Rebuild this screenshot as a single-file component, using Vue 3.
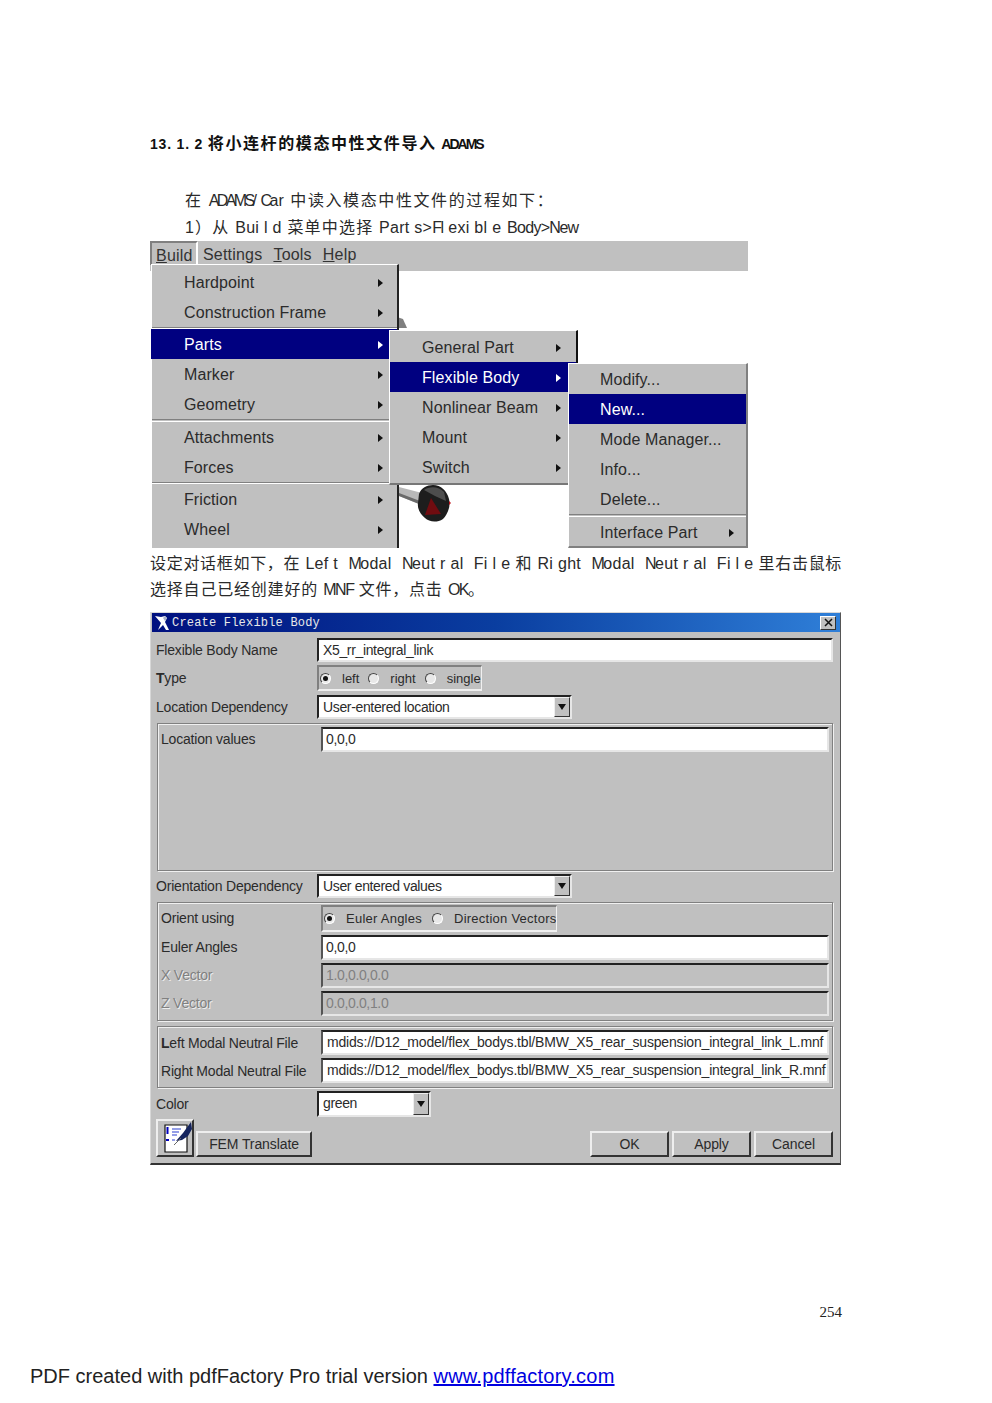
<template>
  <div class="sheet">
    <div class="doc">
      <h2 class="heading">13. 1. 2 <span class="hz">将小连杆的模态中性文件导入</span> <span class="sq">ADAMS</span></h2>

      <p class="line first">在 <span class="sq">ADAMS/</span> <span class="sq">C</span><span class="la">ar</span> 中读入模态中性文件的过程如下：</p>
      <p class="line second">1）从 <span class="la">Bui l d</span> 菜单中选择 <span class="la">Part s&gt;</span><span class="sq">Fl</span> <span class="la">exi bl e</span> <span class="tight">Body&gt;</span><span class="sq">N</span><span class="tight">ew</span></p>

      <div class="shot">
        <div class="menubar">
          <span class="tab"><u>B</u>uild</span>
          <span class="bar-item">Settings</span>
          <span class="bar-item"><u>T</u>ools</span>
          <span class="bar-item"><u>H</u>elp</span>
        </div>

        <!-- bit of the model showing behind the menus -->
        <svg class="model-top" width="14" height="14" viewBox="0 0 14 14">
          <path d="M0 0 L6 2 L10 11 L0 11 Z" fill="#808080" />
        </svg>
        <svg class="model" width="56" height="42" viewBox="0 0 56 42">
          <path d="M2 4 L25 10 L22 21 L2 13 Z" fill="#b8b8b8" />
          <path d="M2 10 L23 18 L22 21 L2 13 Z" fill="#6a6a6a" />
          <path d="M22 11 C24 5 30 2 36 2 C44 2 50 8 52 16 C54 24 50 32 46 36 C40 40 32 39 28 35 C24 32 20 26 21 20 Z" fill="#1d1d1d" />
          <path d="M27 7 C32 3 42 3 47 9 L49 18 L38 13 Z" fill="#4d4d4d" />
          <path d="M34 15 L28 32 L44 31 Z" fill="#700c10" />
          <path d="M52 18 L54 20 L52 22 Z" fill="#c01018" />
        </svg>

        <div v-for="menu in menus" :key="menu.name" class="menu" :class="menu.name">
          <template v-for="(item, i) in menu.items" :key="i">
            <div v-if="item.sep" class="sep" :style="{ height: item.sep + 'px' }"></div>
            <div v-else class="item" :class="{ on: item.on }">
              <span>{{ item.label }}</span>
              <i v-if="item.sub" class="arrow"></i>
            </div>
          </template>
        </div>
      </div>

      <p class="line just">设定对话框如下，在 <span class="la">Lef t</span>&nbsp; <span class="sq">M</span><span class="la">odal</span>&nbsp; <span class="sq">N</span><span class="la">eut r al</span>&nbsp; <span class="la">Fi l e</span> 和 <span class="la">Ri ght</span>&nbsp; <span class="sq">M</span><span class="la">odal</span>&nbsp; <span class="sq">N</span><span class="la">eut r al</span>&nbsp; <span class="la">Fi l e</span> 里右击鼠标</p>
      <p class="line">选择自己已经创建好的 <span class="sq">MNF</span> 文件，点击 <span class="sq">OK</span>。</p>

      <div class="dialog">
        <div class="titlebar">
          <svg class="logo" width="16" height="16" viewBox="0 0 16 16">
            <path d="M0 1 L6 2 L10 1 L12 3 L10 7 L14 15 L11 15 L8 10 L3 15 L6 8 Z" fill="#fff" />
            <path d="M8 3 L10 1 L12 3 L10 6 Z" fill="#aab2cc" />
          </svg>
          <span class="title-text">Create Flexible Body</span>
          <span class="close">
            <svg width="9" height="9" viewBox="0 0 9 9"><path d="M1 1 L8 8 M8 1 L1 8" stroke="#111" stroke-width="1.5" /></svg>
          </span>
        </div>

        <div class="body">
          <div class="row mt6">
            <label class="lbl">Flexible Body Name</label>
            <div class="field wide">X5_rr_integral_link</div>
          </div>

          <div class="row r26 mt3">
            <label class="lbl"><b>T</b>ype</label>
            <div class="radios type-radios">
              <span class="radio on"></span><span class="r-text">left</span>
              <span class="radio"></span><span class="r-text">right</span>
              <span class="radio"></span><span class="r-text">single</span>
            </div>
          </div>

          <div class="row mt4">
            <label class="lbl">Location Dependency</label>
            <div class="field select">
              <span>User-entered location</span>
              <span class="drop"><i></i></span>
            </div>
          </div>

          <div class="panel loc mt4">
            <div class="prow">
              <label class="lbl inner">Location values</label>
              <div class="field inner-field">0,0,0</div>
            </div>
          </div>

          <div class="row mt3">
            <label class="lbl">Orientation Dependency</label>
            <div class="field select">
              <span>User entered values</span>
              <span class="drop"><i></i></span>
            </div>
          </div>

          <div class="panel orient mt4">
            <div class="prow h27">
              <label class="lbl inner">Orient using</label>
              <div class="radios orient-radios">
                <span class="radio on"></span><span class="r-text">Euler Angles</span>
                <span class="radio"></span><span class="r-text">Direction Vectors</span>
              </div>
            </div>
            <div class="prow mt3">
              <label class="lbl inner">Euler Angles</label>
              <div class="field inner-field">0,0,0</div>
            </div>
            <div class="prow mt3">
              <label class="lbl inner off">X Vector</label>
              <div class="field inner-field dis">1.0,0.0,0.0</div>
            </div>
            <div class="prow mt3">
              <label class="lbl inner off">Z Vector</label>
              <div class="field inner-field dis">0.0,0.0,1.0</div>
            </div>
          </div>

          <div class="panel files mt5">
            <div class="prow">
              <label class="lbl inner"><b>L</b>eft Modal Neutral File</label>
              <div class="field inner-field path">mdids://D12_model/flex_bodys.tbl/BMW_X5_rear_suspension_integral_link_L.mnf</div>
            </div>
            <div class="prow mt3">
              <label class="lbl inner">Right Modal Neutral File</label>
              <div class="field inner-field path">mdids://D12_model/flex_bodys.tbl/BMW_X5_rear_suspension_integral_link_R.mnf</div>
            </div>
          </div>

          <div class="row r26 mt3">
            <label class="lbl">Color</label>
            <div class="field select short">
              <span>green</span>
              <span class="drop"><i></i></span>
            </div>
          </div>

          <div class="actions">
            <button class="btn icon-btn">
              <svg width="32" height="32" viewBox="0 0 32 32">
                <path d="M6 3 H28 V30 H6 Z" fill="#fff" stroke="#111" stroke-width="1.2" />
                <path d="M8.5 5 V12 M7 18 H10" stroke="#0000c0" stroke-width="2" />
                <path d="M13 7 H22 M13 10 H20 M13 13 H18 M13 18 H16" stroke="#2a3fd0" stroke-width="1.2" />
                <path d="M17 19 L24 11 L32 0 L33 7 L29 14 L23 18 Z" fill="#16255e" />
                <path d="M15 23 L22 16" stroke="#666" stroke-width="1" />
              </svg>
            </button>
            <button class="btn fem">FEM Translate</button>
            <span class="grow"></span>
            <button class="btn act">OK</button>
            <button class="btn act">Apply</button>
            <button class="btn act">Cancel</button>
          </div>
        </div>
      </div>

      <div class="page-no">254</div>
    </div>

    <div class="footer">PDF created with pdfFactory Pro trial version <a href="#">www.pdffactory.com</a></div>
  </div>
</template>

<script setup>
const menus = [
  {
    name: 'm1',
    items: [
      { label: 'Hardpoint', sub: true },
      { label: 'Construction Frame', sub: true },
      { sep: 2 },
      { label: 'Parts', sub: true, on: true },
      { label: 'Marker', sub: true },
      { label: 'Geometry', sub: true },
      { sep: 3 },
      { label: 'Attachments', sub: true },
      { label: 'Forces', sub: true },
      { sep: 2 },
      { label: 'Friction', sub: true },
      { label: 'Wheel', sub: true }
    ]
  },
  {
    name: 'm2',
    items: [
      { label: 'General Part', sub: true },
      { label: 'Flexible Body', sub: true, on: true },
      { label: 'Nonlinear Beam', sub: true },
      { label: 'Mount', sub: true },
      { label: 'Switch', sub: true }
    ]
  },
  {
    name: 'm3',
    items: [
      { label: 'Modify...' },
      { label: 'New...', on: true },
      { label: 'Mode Manager...' },
      { label: 'Info...' },
      { label: 'Delete...' },
      { sep: 3 },
      { label: 'Interface Part', sub: true }
    ]
  }
]
</script>

<style>
html, body {
  background: #fff;
}
</style>

<style scoped>
.sheet {
  width: 992px;
  height: 1403px;
  background: #fff;
  font-family: "Liberation Sans", "Noto Sans CJK SC", sans-serif;
  color: #1c1c1c;
  overflow: hidden;
}

.doc {
  padding: 134px 0 0 150px;
  width: 692px;
}

.heading {
  margin: 0;
  height: 19px;
  line-height: 19px;
  font-size: 14px;
  font-weight: 700;
  white-space: nowrap;
  letter-spacing: 0.8px;
  color: #111;
}

.heading .hz {
  font-size: 16px;
  letter-spacing: 1.6px;
}

.heading .sq {
  font-size: 14px;
  letter-spacing: -2px;
}

.line {
  margin: 0;
  height: 26px;
  line-height: 26px;
  font-size: 16px;
  letter-spacing: 0.8px;
  white-space: nowrap;
  font-weight: 400;
  color: #2a2a2a;
}

.line.first {
  margin-top: 34px;
  height: 27px;
  line-height: 27px;
  padding-left: 35px;
  letter-spacing: 1.6px;
}

.line.first .sq {
  letter-spacing: -2.6px;
}

.line.second {
  height: 27px;
  line-height: 27px;
  padding-left: 35px;
  letter-spacing: 1.2px;
}

.line.just {
  margin-top: 3px;
  white-space: normal;
  text-align: justify;
  text-align-last: justify;
  letter-spacing: 0.6px;
}

.la {
  letter-spacing: 0.3px;
}

.tight {
  letter-spacing: -0.7px;
}

.sq {
  letter-spacing: -1.5px;
}

/* menu screenshot */
.shot {
  position: relative;
  width: 598px;
  height: 307px;
}

.menubar {
  height: 30px;
  background: #c0c0c0;
  display: flex;
  align-items: flex-start;
  font-size: 16px;
  line-height: 27px;
  letter-spacing: 0.2px;
  color: #333;
}

.tab {
  box-sizing: border-box;
  width: 48px;
  height: 24px;
  padding-left: 4px;
  border-top: 2px solid #808080;
  border-left: 2px solid #808080;
  border-right: 2px solid #fff;
  line-height: 26px;
  background: #c0c0c0;
}

.bar-item {
  margin-left: 5px;
  margin-right: 6px;
}

.model-top {
  position: absolute;
  left: 247px;
  top: 76px;
}

.model {
  position: absolute;
  left: 247px;
  top: 242px;
}

.menu {
  position: absolute;
  box-sizing: border-box;
  background: #c0c0c0;
  border-top: 1px solid #fff;
  border-left: 1px solid #fff;
}

.m1 {
  left: 1px;
  top: 23px;
  width: 248px;
  height: 284px;
  padding-top: 2px;
  border-right: 2px solid #222;
}

.m2 {
  left: 239px;
  top: 89px;
  width: 189px;
  height: 155px;
  padding-top: 1px;
  border-right: 2px solid #111;
  border-bottom: 2px solid #777;
}

.m3 {
  left: 418px;
  top: 122px;
  width: 180px;
  height: 185px;
  border-right: 2px solid #808080;
  border-bottom: 2px solid #808080;
}

.item {
  box-sizing: border-box;
  height: 30px;
  padding: 1px 14px 0 32px;
  display: flex;
  align-items: center;
  justify-content: space-between;
  font-size: 16px;
  letter-spacing: 0.1px;
  color: #2b2b2b;
}

.m2 .item {
  padding-right: 15px;
}

.m3 .item {
  padding-left: 31px;
  padding-right: 12px;
}

.item.on {
  background: #000080;
  color: #fff;
}

.m1 .item.on {
  margin-left: -1px;
  padding-left: 33px;
}

.arrow {
  width: 0;
  height: 0;
  border-left: 5px solid #111;
  border-top: 4px solid transparent;
  border-bottom: 4px solid transparent;
}

.item.on .arrow {
  border-left-color: #fff;
}

.sep {
  box-sizing: border-box;
  border-top: 1px solid #808080;
  border-bottom: 1px solid #fff;
}

/* dialog */
.dialog {
  margin-top: 9px;
  box-sizing: border-box;
  width: 691px;
  height: 553px;
  background: #c0c0c0;
  border-top: 1px solid #d8d8d8;
  border-left: 1px solid #d8d8d8;
  border-right: 1px solid #555;
  border-bottom: 2px solid #333;
  font-size: 14px;
  color: #2b2b2b;
}

.titlebar {
  height: 19px;
  margin-left: 1px;
  display: flex;
  align-items: center;
  background: linear-gradient(90deg, #00107f 0%, #0a3ea0 50%, #2f7fd8 100%);
}

.logo {
  flex: none;
  margin-left: 3px;
}

.title-text {
  margin-left: 1px;
  font-family: "Liberation Mono", monospace;
  font-size: 12px;
  letter-spacing: 0.2px;
  color: #e8e8e8;
}

.close {
  margin-left: auto;
  margin-right: 4px;
  width: 16px;
  height: 14px;
  background: #c0c0c0;
  border: 1px solid;
  border-color: #fff #333 #333 #fff;
  box-sizing: border-box;
  display: flex;
  align-items: center;
  justify-content: center;
}

.body {
  padding: 0 7px 0 5px;
}

.mt3 { margin-top: 3px; }
.mt4 { margin-top: 4px; }
.mt5 { margin-top: 5px; }
.mt6 { margin-top: 6px; }

.row,
.prow {
  display: flex;
  align-items: center;
  height: 24px;
}

.prow {
  height: 25px;
}

.r26 { height: 26px; }
.prow.h27 { height: 27px; }

.lbl {
  width: 161px;
  flex: none;
  letter-spacing: -0.2px;
  white-space: nowrap;
}

.lbl.inner {
  width: 160px;
}

.loc .lbl,
.orient .lbl {
  padding-bottom: 2px;
}

.lbl.off {
  color: #808080;
  text-shadow: 1px 1px 0 #eee;
}

.field {
  box-sizing: border-box;
  height: 100%;
  background: #fff;
  border-style: solid;
  border-width: 2px;
  border-color: #222 #e6e6e6 #e6e6e6 #222;
  padding-left: 4px;
  line-height: 20px;
  white-space: nowrap;
  overflow: hidden;
  letter-spacing: -0.35px;
}

.wide {
  width: 516px;
}

.inner-field {
  width: 508px;
  padding-left: 3px;
  border-left-color: #555;
}

.path {
  padding-left: 4px;
  letter-spacing: -0.18px;
}

.dis {
  background: #c0c0c0;
  color: #808080;
}

.select {
  width: 255px;
  display: flex;
  justify-content: space-between;
  padding-right: 0;
}

.select.short {
  width: 114px;
}

.drop {
  box-sizing: border-box;
  width: 16px;
  height: 100%;
  background: #c0c0c0;
  border: 1px solid;
  border-color: #eee #333 #333 #eee;
  display: flex;
  align-items: center;
  justify-content: center;
}

.drop i {
  width: 0;
  height: 0;
  border-top: 6px solid #111;
  border-left: 4px solid transparent;
  border-right: 4px solid transparent;
}

.radios {
  box-sizing: border-box;
  height: 100%;
  display: flex;
  align-items: center;
  font-size: 13px;
  border-top: 2px solid #808080;
  border-left: 2px solid #808080;
  border-right: 1px solid #f0f0f0;
  border-bottom: 2px solid #f0f0f0;
}

.type-radios {
  width: 165px;
  padding-left: 1px;
}

.orient-radios {
  width: 236px;
  padding-left: 1px;
  overflow: hidden;
  white-space: nowrap;
}

.radio {
  box-sizing: border-box;
  flex: none;
  width: 11px;
  height: 11px;
  border-radius: 50%;
  background: #e8e8e8;
  border: 1px solid;
  border-color: #444 #fff #fff #444;
  position: relative;
}

.radio.on::after {
  content: "";
  position: absolute;
  left: 2px;
  top: 2px;
  width: 5px;
  height: 5px;
  border-radius: 50%;
  background: #111;
}

.r-text {
  margin-left: 11px;
  margin-right: 9px;
}

.orient-radios .r-text {
  margin-right: 10px;
  letter-spacing: 0.25px;
}

.panel {
  box-sizing: border-box;
  width: 676px;
  margin-left: 1px;
  padding: 3px 2px 0 3px;
  border: 1px solid #808080;
  box-shadow: inset 1px 1px 0 #f0f0f0, 1px 1px 0 #f0f0f0;
}

.loc {
  height: 148px;
}

.orient {
  height: 119px;
  padding-top: 2px;
}

.files {
  height: 62px;
  padding-top: 3px;
}

.actions {
  margin-top: 2px;
  height: 38px;
  display: flex;
  align-items: flex-end;
}

.btn {
  box-sizing: border-box;
  height: 26px;
  background: #c0c0c0;
  border-style: solid;
  border-width: 2px;
  border-color: #eee #333 #333 #eee;
  padding: 0;
  font-family: "Liberation Sans", sans-serif;
  font-size: 14px;
  letter-spacing: -0.1px;
  color: #2b2b2b;
}

.icon-btn {
  width: 38px;
  height: 38px;
  display: flex;
  align-items: center;
  justify-content: center;
}

.icon-btn svg {
  overflow: visible;
}

.fem {
  width: 116px;
  margin-left: 2px;
}

.grow {
  flex: 1;
}

.act {
  width: 79px;
  margin-left: 3px;
}

.page-no {
  margin-top: 140px;
  height: 14px;
  line-height: 14px;
  text-align: right;
  font-family: "Liberation Serif", serif;
  font-size: 15px;
  color: #222;
}

.footer {
  margin-top: 45px;
  padding-left: 30px;
  height: 24px;
  line-height: 24px;
  font-size: 20px;
  color: #222;
  white-space: nowrap;
}

.footer a {
  color: #0000e0;
  text-decoration: underline;
  letter-spacing: 0.22px;
}
</style>
